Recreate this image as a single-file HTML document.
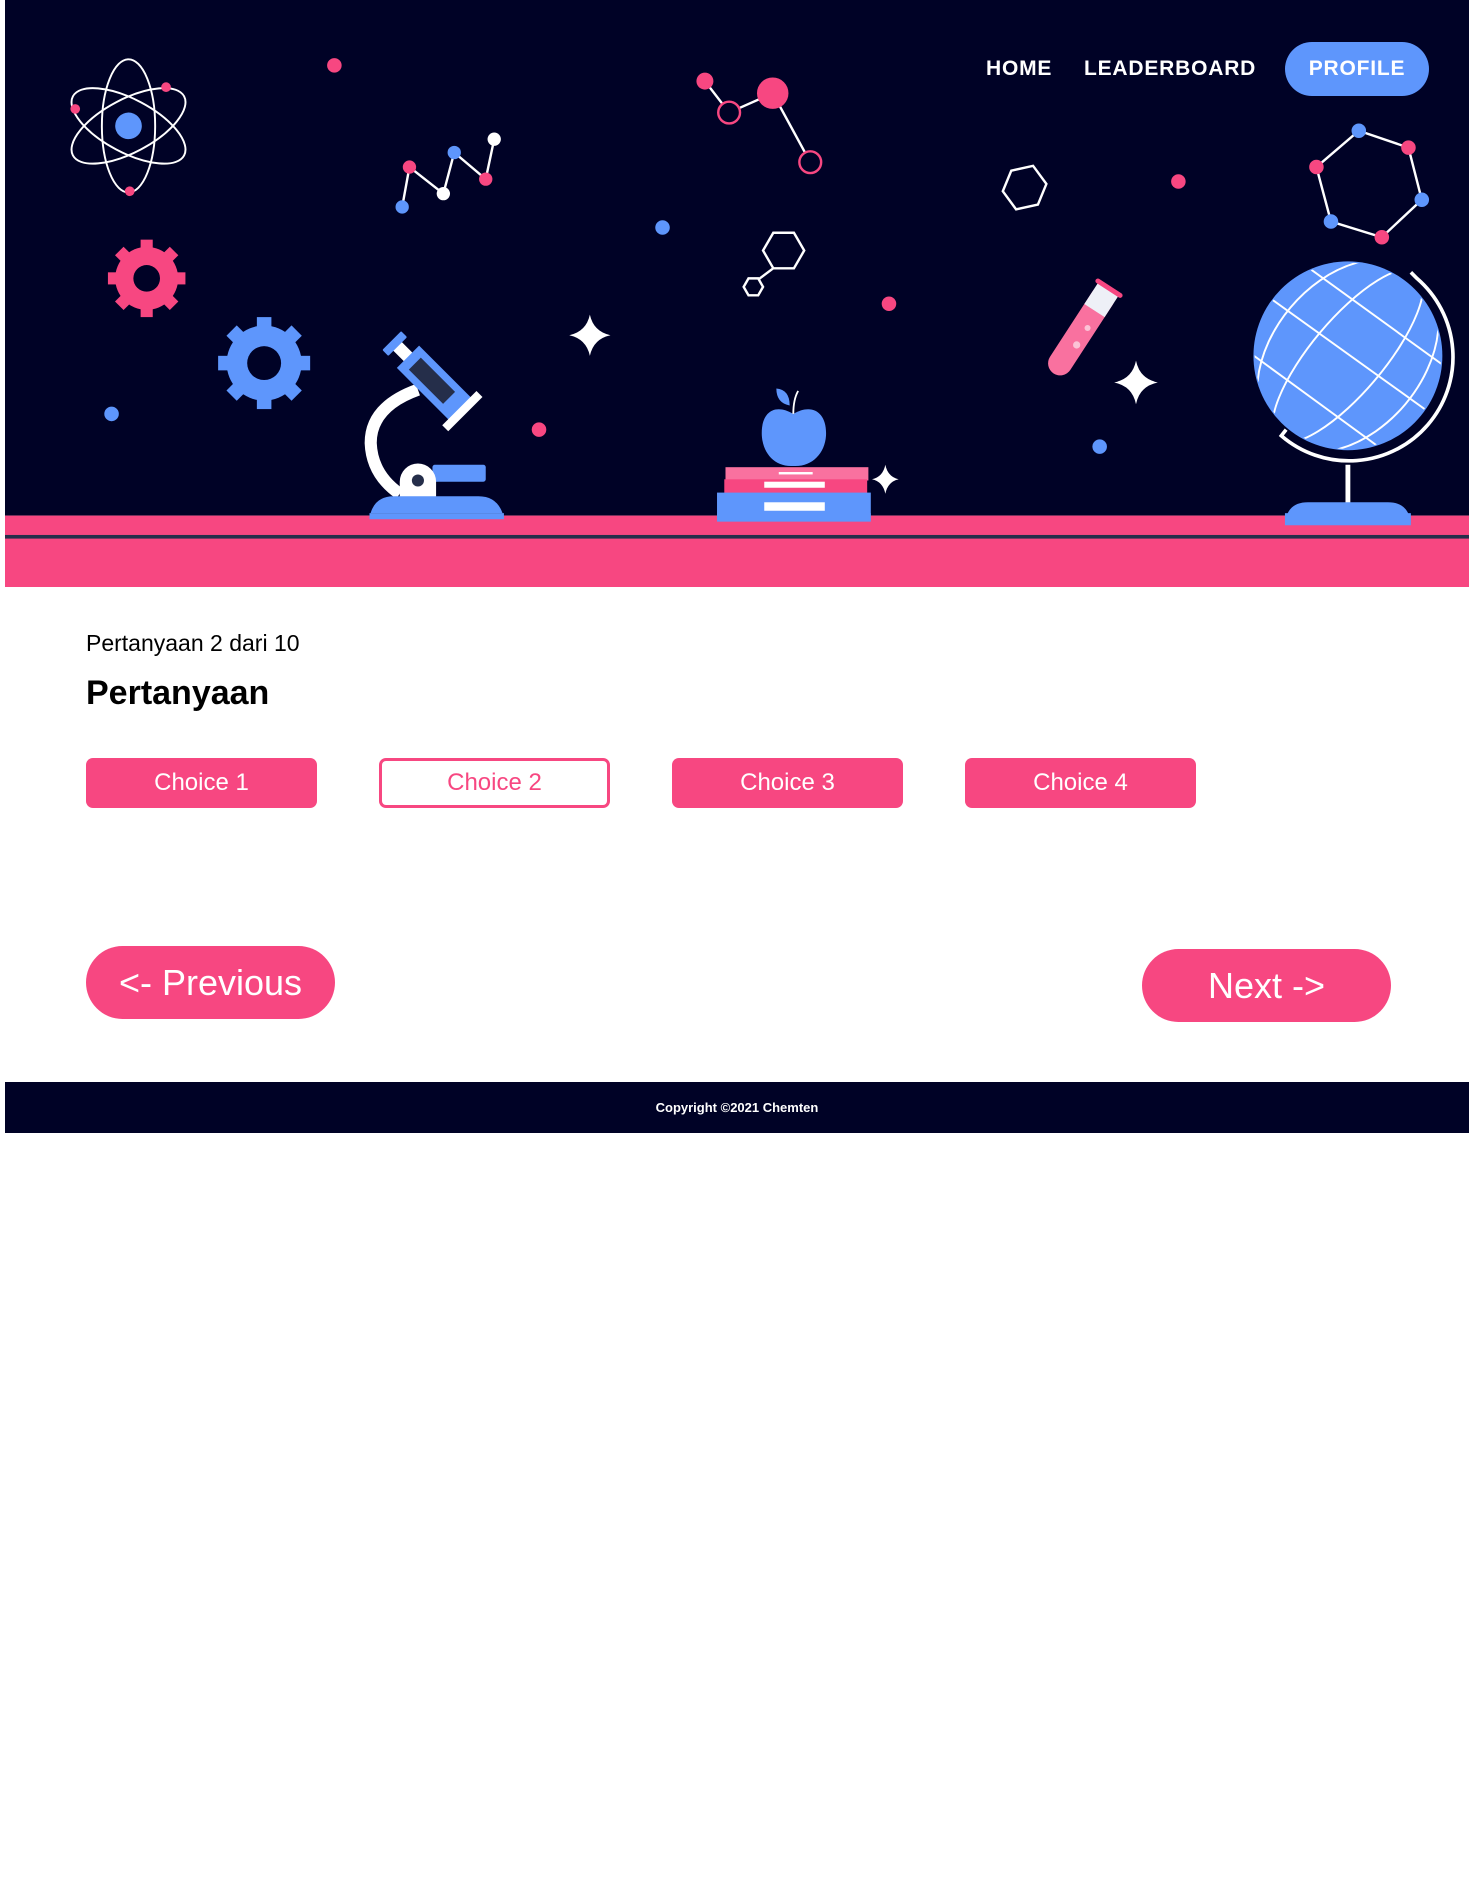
<!DOCTYPE html>
<html><head><meta charset="utf-8"><style>
*{margin:0;padding:0;box-sizing:border-box}
body{width:1474px;height:1899px;background:#fff;font-family:"Liberation Sans",sans-serif;position:relative;overflow:hidden}
.hdr{position:absolute;left:5px;top:0;width:1464px;height:587px}
.nav{position:absolute;top:42px;height:54px;display:flex;align-items:center;color:#fff;font-weight:bold;font-size:21px;letter-spacing:0.8px}
.t{position:absolute;left:86px;color:#000}
.ch{position:absolute;top:758px;width:231px;height:50px;border-radius:7px;background:#F74781;color:#fff;font-size:24px;display:flex;align-items:center;justify-content:center}
.nb{position:absolute;width:249px;height:73px;border-radius:37px;background:#F74781;color:#fff;font-size:36px;display:flex;align-items:center;justify-content:center}
.ft{position:absolute;left:5px;top:1082px;width:1464px;height:51px;background:#000226;color:#fff;font-size:13px;font-weight:bold;display:flex;align-items:center;justify-content:center}
</style></head><body>
<svg class="hdr" viewBox="4 0 1209 485" preserveAspectRatio="none">
<rect x="4" y="0" width="1209" height="426" fill="#000226"/>
<g fill="none" stroke="#fff" stroke-width="1.6">
<ellipse cx="106" cy="104" rx="52" ry="22" transform="rotate(28 106 104)"/>
<ellipse cx="106" cy="104" rx="52" ry="22" transform="rotate(-28 106 104)"/>
<ellipse cx="106" cy="104" rx="22" ry="55"/>
</g>
<circle cx="106" cy="104" r="11" fill="#5E96FC"/>
<circle cx="137" cy="72" r="4" fill="#F74781"/><circle cx="62" cy="90" r="4" fill="#F74781"/><circle cx="107" cy="158" r="4" fill="#F74781"/>
<g transform="translate(121 230)" fill="#F74781">
<rect x="-5" y="-32" width="10" height="64"/><rect x="-5" y="-32" width="10" height="64" transform="rotate(45)"/><rect x="-5" y="-32" width="10" height="64" transform="rotate(90)"/><rect x="-5" y="-32" width="10" height="64" transform="rotate(135)"/>
<circle r="26"/><circle r="11" fill="#000226"/>
</g>
<g transform="translate(218 300)" fill="#5E96FC">
<rect x="-6" y="-38" width="12" height="76"/><rect x="-6" y="-38" width="12" height="76" transform="rotate(45)"/><rect x="-6" y="-38" width="12" height="76" transform="rotate(90)"/><rect x="-6" y="-38" width="12" height="76" transform="rotate(135)"/>
<circle r="31"/><circle r="14" fill="#000226"/>
</g>
<circle cx="276" cy="54" r="6" fill="#F74781"/><circle cx="547" cy="188" r="6" fill="#5E96FC"/><circle cx="734" cy="251" r="6" fill="#F74781"/><circle cx="445" cy="355" r="6" fill="#F74781"/><circle cx="92" cy="342" r="6" fill="#5E96FC"/><circle cx="908" cy="369" r="6" fill="#5E96FC"/><circle cx="973" cy="150" r="6" fill="#F74781"/>
<polyline points="332,171 338,138 366,160 375,126 401,148 408,115" fill="none" stroke="#fff" stroke-width="2"/>
<circle cx="332" cy="171" r="5.5" fill="#5E96FC"/><circle cx="338" cy="138" r="5.5" fill="#F74781"/><circle cx="366" cy="160" r="5.5" fill="#fff"/><circle cx="375" cy="126" r="5.5" fill="#5E96FC"/><circle cx="401" cy="148" r="5.5" fill="#F74781"/><circle cx="408" cy="115" r="5.5" fill="#fff"/>
<polyline points="582,67 602,93 638,77 669,134" fill="none" stroke="#fff" stroke-width="2"/>
<circle cx="582" cy="67" r="7" fill="#F74781"/>
<circle cx="602" cy="93" r="9" fill="#000226" stroke="#F74781" stroke-width="2"/>
<circle cx="638" cy="77" r="13" fill="#F74781"/>
<circle cx="669" cy="134" r="9" fill="#000226" stroke="#F74781" stroke-width="2"/>
<g fill="none" stroke="#fff" stroke-width="2">
<polygon points="864,152 857,169 839,173 828,158 835,141 853,137"/>
<polygon points="664,207 655.5,221.7 638.5,221.7 630,207 638.5,192.3 655.5,192.3"/>
<polygon points="630,237 626,244 618,244 614,237 618,230 626,230"/>
<line x1="638" y1="222" x2="626" y2="231"/>
<polygon points="1122,108 1163,122 1174,165 1141,196 1099,183 1087,138"/>
</g>
<circle cx="1122" cy="108" r="6" fill="#5E96FC"/><circle cx="1163" cy="122" r="6" fill="#F74781"/><circle cx="1174" cy="165" r="6" fill="#5E96FC"/><circle cx="1141" cy="196" r="6" fill="#F74781"/><circle cx="1099" cy="183" r="6" fill="#5E96FC"/><circle cx="1087" cy="138" r="6" fill="#F74781"/>
<path d="M487,260 Q490,274 504,277 Q490,280 487,294 Q484,280 470,277 Q484,274 487,260Z" fill="#fff"/>
<path d="M938,298 Q941,313 956,316 Q941,319 938,334 Q935,319 920,316 Q935,313 938,298Z" fill="#fff"/>
<path d="M731,384 Q733,394 742,396 Q733,398 731,408 Q729,398 720,396 Q729,394 731,384Z" fill="#fff"/>
<!-- microscope -->
<path d="M345,322 Q306,336 306,366 Q307,392 330,408" fill="none" stroke="#fff" stroke-width="10"/>
<g transform="translate(358 316) rotate(45)">
<rect x="-44" y="-5" width="15" height="10" fill="#fff"/>
<rect x="-49" y="-11" width="7" height="22" rx="1" fill="#5E96FC"/>
<rect x="-30" y="-13" width="61" height="26" fill="#5E96FC"/>
<rect x="-22" y="-7" width="40" height="14" fill="#252e4a"/>
<rect x="30" y="-20" width="7" height="40" fill="#fff"/>
</g>
<rect x="357" y="384" width="44" height="14" rx="2" fill="#5E96FC"/>
<path d="M330,412 V398 A15,15 0 0 1 360,398 V412Z" fill="#fff"/>
<circle cx="345" cy="397" r="5" fill="#252e4a"/>
<path d="M305,428 Q308,410 325,410 H395 Q412,410 416,428Z" fill="#5E96FC"/>
<rect x="305" y="424" width="111" height="2" fill="#252e4a"/>
<rect x="599" y="386" width="118" height="11" fill="#F9719F"/>
<rect x="598" y="396" width="118" height="12" fill="#F74781"/>
<rect x="592" y="407" width="127" height="24" fill="#5E96FC"/>
<rect x="643" y="390" width="28" height="2" fill="#fff"/><rect x="631" y="398" width="50" height="5" fill="#fff"/><rect x="631" y="415" width="50" height="7" fill="#fff"/>
<path d="M655,342 C640,333 628,340 629,360 C630,375 640,386 655,385 C670,386 681,375 682,360 C683,340 670,333 655,342Z" fill="#5E96FC"/>
<path d="M655,342 Q655,330 659,323" stroke="#fff" stroke-width="1.5" fill="none"/>
<path d="M641,321 Q652,322 652,335 Q641,333 641,321Z" fill="#5E96FC"/>
<g transform="rotate(33 895 270)">
<rect x="885" y="232" width="20" height="84" rx="10" fill="#F9719F"/>
<rect x="885" y="232" width="20" height="22" fill="#eef0f7"/>
<rect x="882" y="230" width="26" height="4" rx="2" fill="#F74781"/>
</g>
<circle cx="889" cy="285" r="3" fill="#fbc3d6"/><circle cx="898" cy="271" r="2.5" fill="#fbc3d6"/>
<!-- globe -->
<circle cx="1113" cy="294" r="78" fill="#5E96FC"/>
<clipPath id="gc"><circle cx="1113" cy="294" r="77"/></clipPath>
<g fill="none" stroke="#fff" stroke-width="1.6" clip-path="url(#gc)">
<ellipse cx="1113" cy="294" rx="90" ry="30" transform="rotate(-50 1113 294)"/>
<ellipse cx="1113" cy="294" rx="90" ry="62" transform="rotate(-50 1113 294)"/>
<line x1="1040" y1="240" x2="1200" y2="355"/><line x1="1065" y1="210" x2="1210" y2="315"/><line x1="1030" y1="290" x2="1160" y2="385"/>
</g>
<path d="M1165,225 L1170,230 A84,84 0 0 1 1058,360 L1062,355" fill="none" stroke="#fff" stroke-width="3"/>
<rect x="1111" y="384" width="4" height="32" fill="#fff"/>
<path d="M1061,434 Q1062,415 1080,415 H1146 Q1164,415 1165,434Z" fill="#5E96FC"/>
<rect x="4" y="426" width="1209" height="59" fill="#F74781"/>
<rect x="4" y="442" width="1209" height="3" fill="#252e4a"/>
<rect x="305" y="424" width="111" height="5" fill="#5E96FC"/>
<rect x="592" y="424" width="127" height="7" fill="#5E96FC"/>
<rect x="1061" y="424" width="104" height="10" fill="#5E96FC"/>
</svg>
<div class="nav" style="left:986px">HOME</div>
<div class="nav" style="left:1084px">LEADERBOARD</div>
<div class="nav" style="left:1285px;width:144px;justify-content:center;background:#5E96FC;border-radius:27px">PROFILE</div>
<div class="t" style="top:630px;font-size:23px">Pertanyaan 2 dari 10</div>
<div class="t" style="top:674px;font-size:34px;font-weight:bold">Pertanyaan</div>
<div class="ch" style="left:86px">Choice 1</div>
<div class="ch" style="left:379px;background:#fff;color:#F74781;border:3px solid #F74781">Choice 2</div>
<div class="ch" style="left:672px">Choice 3</div>
<div class="ch" style="left:965px">Choice 4</div>
<div class="nb" style="left:86px;top:946px">&lt;- Previous</div>
<div class="nb" style="left:1142px;top:949px">Next -&gt;</div>
<div class="ft">Copyright ©2021 Chemten</div>
</body></html>
